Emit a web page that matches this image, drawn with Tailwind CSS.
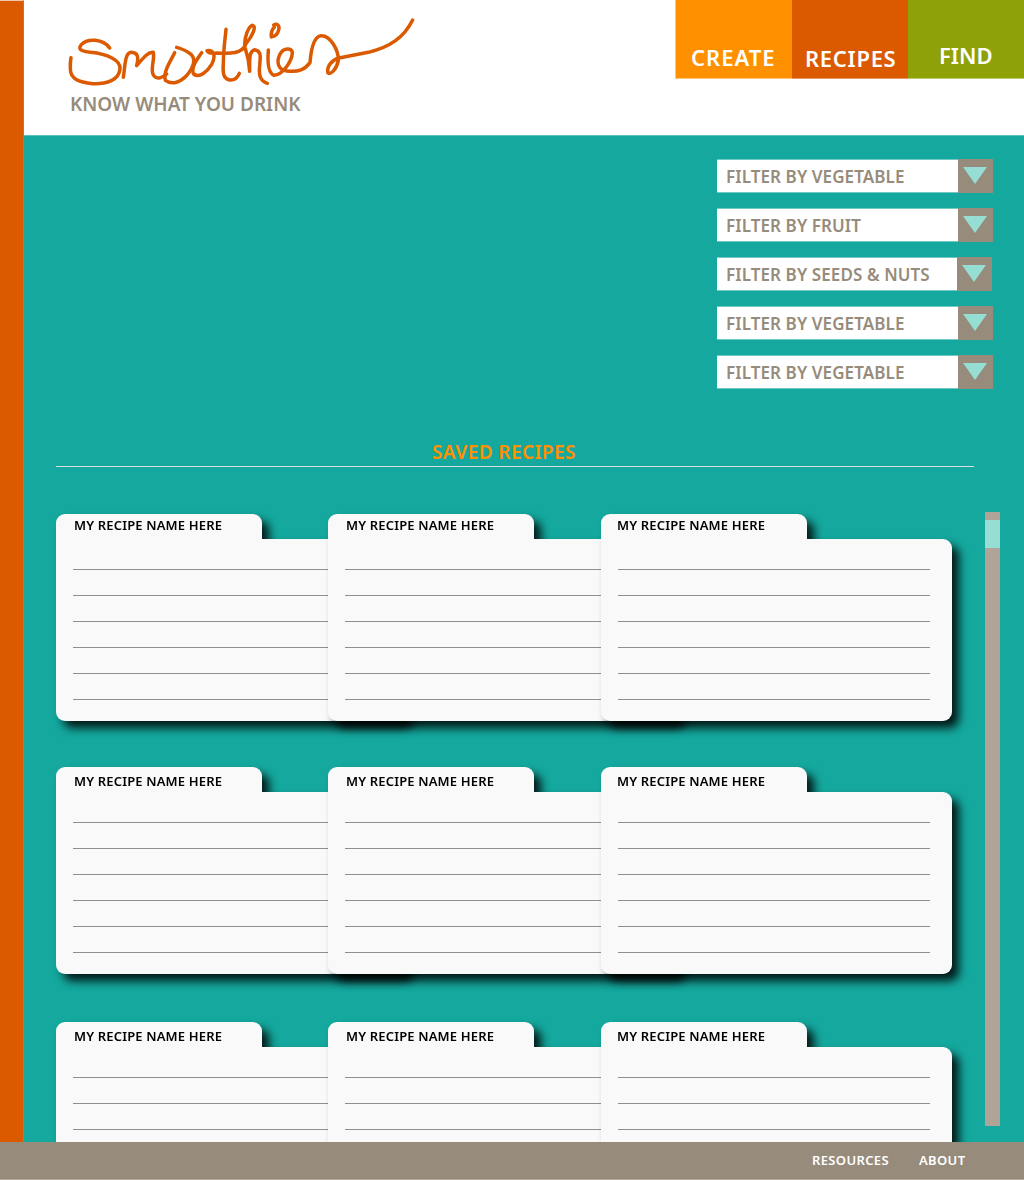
<!DOCTYPE html>
<html lang="en">
<head>
<meta charset="utf-8">
<title>Smoothies</title>
<script src="https://cdn.jsdelivr.net/npm/@tailwindcss/browser@4"></script>
</head>
<body class="h-[1180px] w-[1024px] overflow-hidden bg-white font-['Noto_Sans',sans-serif] font-semibold whitespace-nowrap">
<div class="flex h-[1142px] overflow-hidden">
  <div class="w-6 shrink-0 border-t border-r border-t-[#f0c8ad] border-r-[#dc6d20] bg-[#db5a00]"></div>
  <div class="flex min-w-0 grow flex-col">
    <header class="flex h-[135px] shrink-0 justify-between">
      <div class="pt-[10px] pl-9">
        <svg class="block h-20 w-[360px]" viewBox="0 0 1080 240" fill="none" stroke="#db5a00" stroke-width="10.5" stroke-linecap="round" stroke-linejoin="round" aria-label="Smoothies">
          <path d="M149 114C129 86 82 84 64 104C50 121 70 124 92 127C142 132 183 151 180 177C177 210 141 222 99 221C54 216 32 207 31 177Q30 159 33 143"/>
          <path d="M190 202C196 164 194 129 214 127C233 128 237 139 230 167C249 145 264 125 280 127C285 152 268 181 282 198C292 210 307 203 320 192"/>
          <path d="M344 128C331 155 309 185 316 211C335 225 359 218 378 199C399 175 409 149 394 134Q377 119 350 112"/>
          <path d="M425 128C410 150 391 175 401 192C419 206 442 184 455 163C469 136 461 120 441 122Q446 132 470 129C510 131 547 133 558 101C578 77 590 49 578 46C567 48 551 80 555 112Q567 148 569 184C569 145 567 124 584 119C607 122 600 147 599 167C596 195 600 213 622 220"/>
          <path d="M498 58C495 91 490 121 490 161C488 190 490 206 509 210Q529 212 538 190"/>
          <path d="M625 120C622 158 626 190 642 196C667 195 696 155 697 128C696 112 671 113 661 131C648 154 653 180 680 183C717 187 735 178 750 158C753 119 760 80 783 77C812 76 836 122 835 151C830 179 811 195 804 189C799 170 815 150 837 144L925 127C991 111 1032 82 1058 30"/>
          <path d="M634 81C632 68 638 55 643 52M641 45C651 40 660 45 656 60Q651 79 635 80"/>
        </svg>
        <p class="mt-px ml-[10px] text-[19px] leading-[26px] text-[#978b7b]">KNOW WHAT YOU DRINK</p>
      </div>
      <nav class="grid h-[79px] w-[349px] grid-cols-[117px_116px_116px] text-[22px] leading-[30px] text-white">
        <a class="border-b border-l border-b-[#ffc97f] border-l-[#ffc680] bg-[#ff9100] pt-[42px] pl-[15px] tracking-[1px]">CREATE</a>
        <a class="border-b border-[#e59a66] bg-[#db5a00] pt-[43px] pl-[13px] tracking-[0.7px]">RECIPES</a>
        <a class="border-b border-[#c1cb70] bg-[#8fa109] pt-10 pl-[31px]">FIND</a>
      </nav>
    </header>
    <main class="grow border-t border-[#5cc2bc] bg-[#14a89e] pt-[23px]">
      <div class="ml-[693px] flex flex-col gap-[15px] text-[17px] tracking-[0.1px] text-[#978b7b]">
        <div class="flex h-[34px] w-[276px] items-center border-y border-[#70cac4] bg-white pl-[9px]"><span class="grow pt-[2px]">FILTER BY VEGETABLE</span><span class="-my-px flex h-[34px] w-[35px] bg-[#978b7b] pt-2 pl-[5px]"><svg class="h-[17px] w-6" viewBox="0 0 24 17"><path fill="#96ddd3" d="M0 0H24L12 17Z"/></svg></span></div>
        <div class="flex h-[34px] w-[276px] items-center border-y border-[#70cac4] bg-white pl-[9px]"><span class="grow pt-[2px]">FILTER BY FRUIT</span><span class="-my-px flex h-[34px] w-[35px] bg-[#978b7b] pt-2 pl-[5px]"><svg class="h-[17px] w-6" viewBox="0 0 24 17"><path fill="#96ddd3" d="M0 0H24L12 17Z"/></svg></span></div>
        <div class="flex h-[34px] w-[275px] items-center border-y border-[#70cac4] bg-white pl-[9px]"><span class="grow pt-[2px]">FILTER BY SEEDS &amp; NUTS</span><span class="-my-px flex h-[34px] w-[35px] bg-[#978b7b] pt-2 pl-[5px]"><svg class="h-[17px] w-6" viewBox="0 0 24 17"><path fill="#96ddd3" d="M0 0H24L12 17Z"/></svg></span></div>
        <div class="flex h-[34px] w-[276px] items-center border-y border-[#70cac4] bg-white pl-[9px]"><span class="grow pt-[2px]">FILTER BY VEGETABLE</span><span class="-my-px flex h-[34px] w-[35px] bg-[#978b7b] pt-2 pl-[5px]"><svg class="h-[17px] w-6" viewBox="0 0 24 17"><path fill="#96ddd3" d="M0 0H24L12 17Z"/></svg></span></div>
        <div class="flex h-[34px] w-[276px] items-center border-y border-[#70cac4] bg-white pl-[9px]"><span class="grow pt-[2px]">FILTER BY VEGETABLE</span><span class="-my-px flex h-[34px] w-[35px] bg-[#978b7b] pt-2 pl-[5px]"><svg class="h-[17px] w-6" viewBox="0 0 24 17"><path fill="#96ddd3" d="M0 0H24L12 17Z"/></svg></span></div>
      </div>
      <h2 class="mt-[49px] ml-8 h-[29px] w-[918px] border-b border-[#dcdcdc] pl-[376px] text-[19px] leading-[28px] tracking-[0.4px] text-[#ff9100]">SAVED RECIPES</h2>
      <div class="mt-[45px] flex">
        <div id="cards" class="ml-8 grid w-[928.5px] grid-cols-[272px_273px_351px] grid-rows-[253px_255px_207px] pt-[2px] text-[13px] leading-[18px] tracking-[0.16px] text-black"></div>
        <div class="h-[614px] w-[15px] bg-[#afa497] pt-2"><div class="h-7 bg-[#96ddd3]"></div></div>
      </div>
    </main>
  </div>
</div>
<footer class="relative flex h-[38px] border-b border-[#b3a99c] bg-[#978b7b] pt-[9px] pl-[812px] text-[13px] leading-[18px] tracking-[0.35px] text-white"><a class="w-[107px]">RESOURCES</a><a>ABOUT</a></footer>
<script>
  // Nine saved recipe cards; the first row's titles sit higher in the tab.
  const rule = '<div class="mb-[25px] h-px bg-[#8e8e8e]"></div>';
  document.getElementById('cards').innerHTML = Array.from({length: 9}, (_, i) => `
    <article class="w-[351px] drop-shadow-[7px_7px_5px_rgba(0,0,0,0.85)]">
      <div class="h-[25px] w-[206px] rounded-t-[9px] bg-[#f9f9f9] ${i % 3 === 2 ? 'pl-4' : 'pl-[18px]'} ${i < 3 ? 'pt-[2px]' : 'pt-[5px]'}">MY RECIPE NAME HERE</div>
      <div class="h-[182px] rounded-r-[9px] rounded-bl-[9px] bg-[#f9f9f9] pt-[30px] pr-[22px] pl-[17px]">${rule.repeat(6)}</div>
    </article>`).join('');
</script>
</body>
</html>
